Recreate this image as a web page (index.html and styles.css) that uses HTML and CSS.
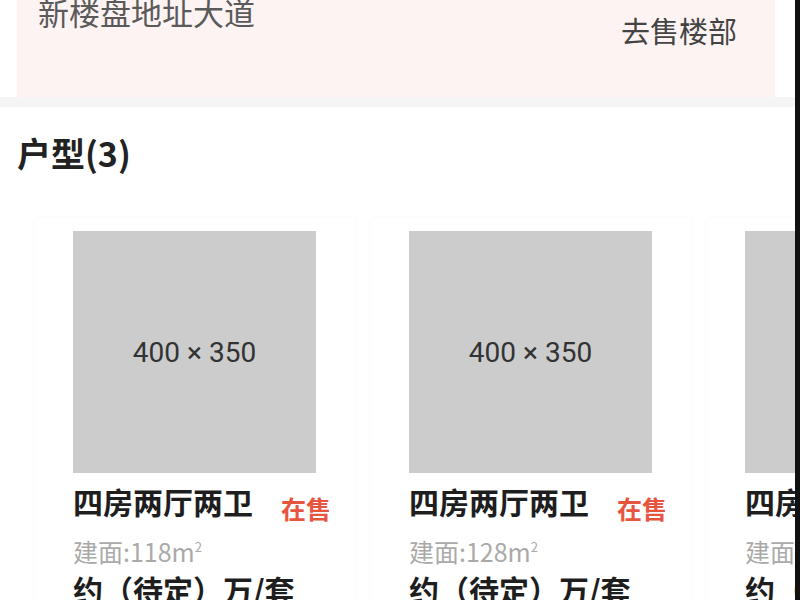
FILE: index.html
```html
<!DOCTYPE html>
<html lang="zh">
<head>
<meta charset="utf-8">
<title>户型</title>
<link rel="stylesheet" href="styles.css">
</head>
<body>
<div class="page">
  <div class="content">
    <section class="addr-section">
      <div class="addr-box">
        <div class="addr-text">新楼盘地址大道</div>
        <div class="addr-go">去售楼部</div>
      </div>
    </section>
    <div class="divider"></div>
    <section class="types">
      <h2 class="types-title">户型(3)</h2>
      <div class="cards">
        <div class="card">
          <div class="ph">400 × 350</div>
          <div class="title-row"><span class="name">四房两厅两卫</span><span class="status">在售</span></div>
          <div class="area">建面:118m<sup class="sq">2</sup></div>
          <div class="price">约（待定）万/套</div>
        </div>
        <div class="card">
          <div class="ph">400 × 350</div>
          <div class="title-row"><span class="name">四房两厅两卫</span><span class="status">在售</span></div>
          <div class="area">建面:128m<sup class="sq">2</sup></div>
          <div class="price">约（待定）万/套</div>
        </div>
        <div class="card">
          <div class="ph">400 × 350</div>
          <div class="title-row"><span class="name">四房两厅两卫</span><span class="status">在售</span></div>
          <div class="area">建面:138m<sup class="sq">2</sup></div>
          <div class="price">约（待定）万/套</div>
        </div>
      </div>
    </section>
  </div>
  <div class="edge"></div>
</div>
</body>
</html>
```
FILE: styles.css
```css
html, body {
  margin: 0;
  padding: 0;
  background: #fff;
  height: 100%;
  overflow: hidden;
}
body {
  font-family: "Noto Sans CJK SC", "Noto Sans", sans-serif;
  color: #222;
}
.page {
  display: flex;
  height: 600px;
}
.content {
  flex: 1;
  overflow: hidden;
  min-width: 0;
}
.edge {
  width: 5px;
  background: #111;
}
.addr-section {
  margin-top: -9px;
  padding: 0 20px 0 17px;
}
.addr-box {
  background: #fdf3f2;
  height: 106px;
  padding: 0 38px 0 21px;
  display: flex;
  justify-content: space-between;
  align-items: flex-start;
}
.addr-text {
  font-size: 31px;
  line-height: 42px;
  color: #5a5a5a;
}
.addr-go {
  margin-top: 21px;
  font-size: 29px;
  line-height: 36px;
  color: #444;
}
.divider {
  height: 10px;
  background: #f5f5f5;
}
.types {
  padding: 25px 0 0 0;
}
.types-title {
  margin: 0 0 0 17px;
  font-size: 34px;
  line-height: 42px;
  font-weight: 700;
  color: #222;
}
.cards {
  margin-top: 44px;
  padding-left: 35px;
  display: flex;
  gap: 16px;
}
.card {
  flex: 0 0 auto;
  width: 320px;
  min-width: 0;
  box-sizing: border-box;
  padding: 13px 38px 0 38px;
  background: #fff;
  box-shadow: 0 0 6px rgba(0, 0, 0, 0.03);
  height: 420px;
}
.ph {
  width: 243px;
  height: 242px;
  background: #cccccc;
  color: #333;
  font-family: "Roboto", "Noto Sans", sans-serif;
  font-size: 28px;
  display: flex;
  align-items: center;
  justify-content: center;
}
.title-row {
  margin-top: 8px;
  display: flex;
  align-items: flex-end;
  white-space: nowrap;
}
.name {
  font-size: 30px;
  line-height: 40px;
  font-weight: 700;
  color: #1e1e1e;
}
.status {
  margin-left: 28px;
  font-size: 25px;
  line-height: 26px;
  font-weight: 700;
  color: #e8553f;
}
.area {
  margin-top: 15px;
  font-size: 25px;
  line-height: 30px;
  color: #aaa;
  white-space: nowrap;
}
.sq {
  font-size: 13px;
  vertical-align: 10px;
  line-height: 0;
}
.price {
  margin-top: 3px;
  font-size: 30px;
  line-height: 40px;
  font-weight: 700;
  color: #1e1e1e;
  white-space: nowrap;
}
```
